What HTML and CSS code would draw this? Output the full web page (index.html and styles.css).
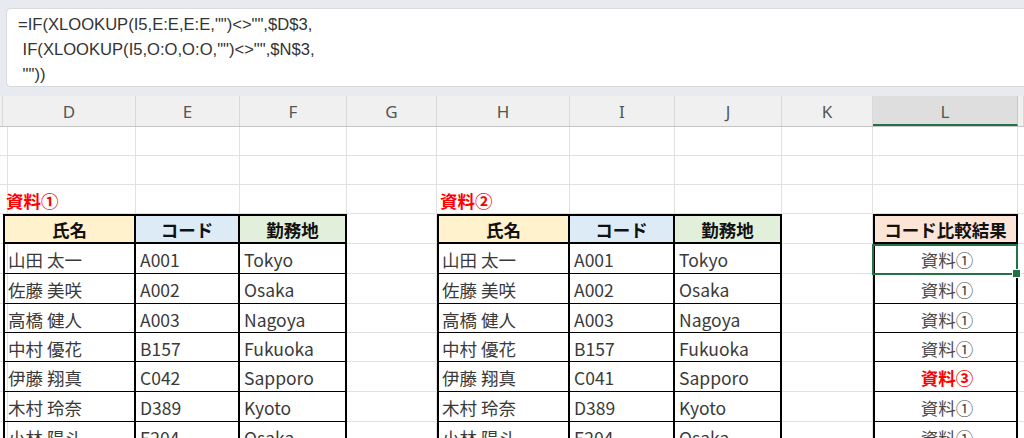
FILE: index.html
```html
<!DOCTYPE html>
<html lang="ja">
<head>
<meta charset="utf-8">
<title>Sheet</title>
<link rel="stylesheet" href="styles.css">
</head>
<body>
<div class="top">
  <div class="fbar"><div class="fl">=IF(XLOOKUP(I5,E:E,E:E,"")&lt;&gt;"",$D$3,</div><div class="fl"> IF(XLOOKUP(I5,O:O,O:O,"")&lt;&gt;"",$N$3,</div><div class="fl"> ""))</div></div>
</div>
<div class="cols">
  <div class="ch"></div>
  <div class="ch">D</div><div class="ch">E</div><div class="ch">F</div><div class="ch">G</div>
  <div class="ch">H</div><div class="ch">I</div><div class="ch">J</div><div class="ch">K</div>
  <div class="ch on">L</div><div class="ch"></div>
</div>
<div class="sheet">
  <div class="row s"><div class="c"></div><div class="c"></div><div class="c"></div><div class="c"></div><div class="c"></div><div class="c"></div><div class="c"></div><div class="c"></div><div class="c"></div><div class="c"></div><div class="c"></div></div>
  <div class="row s"><div class="c"></div><div class="c"></div><div class="c"></div><div class="c"></div><div class="c"></div><div class="c"></div><div class="c"></div><div class="c"></div><div class="c"></div><div class="c"></div><div class="c"></div></div>
  <div class="row s"><div class="c"></div><div class="c label">資料①</div><div class="c"></div><div class="c"></div><div class="c"></div><div class="c label">資料②</div><div class="c"></div><div class="c"></div><div class="c"></div><div class="c"></div><div class="c"></div></div>
  <div class="row"><div class="c"></div>
    <div class="c t first head yellow">氏名</div><div class="c t head blue">コード</div><div class="c t head green">勤務地</div>
    <div class="c"></div>
    <div class="c t first head yellow">氏名</div><div class="c t head blue">コード</div><div class="c t head green">勤務地</div>
    <div class="c"></div>
    <div class="c t first head orange">コード比較結果</div><div class="c"></div></div>
  <div class="row"><div class="c"></div>
    <div class="c t first">山田 太一</div><div class="c t">A001</div><div class="c t">Tokyo</div>
    <div class="c"></div>
    <div class="c t first">山田 太一</div><div class="c t">A001</div><div class="c t">Tokyo</div>
    <div class="c"></div>
    <div class="c t first mid sel">資料①</div><div class="c"></div></div>
  <div class="row"><div class="c"></div>
    <div class="c t first">佐藤 美咲</div><div class="c t">A002</div><div class="c t">Osaka</div>
    <div class="c"></div>
    <div class="c t first">佐藤 美咲</div><div class="c t">A002</div><div class="c t">Osaka</div>
    <div class="c"></div>
    <div class="c t first mid">資料①</div><div class="c"></div></div>
  <div class="row s"><div class="c"></div>
    <div class="c t first">高橋 健人</div><div class="c t">A003</div><div class="c t">Nagoya</div>
    <div class="c"></div>
    <div class="c t first">高橋 健人</div><div class="c t">A003</div><div class="c t">Nagoya</div>
    <div class="c"></div>
    <div class="c t first mid">資料①</div><div class="c"></div></div>
  <div class="row s"><div class="c"></div>
    <div class="c t first">中村 優花</div><div class="c t">B157</div><div class="c t">Fukuoka</div>
    <div class="c"></div>
    <div class="c t first">中村 優花</div><div class="c t">B157</div><div class="c t">Fukuoka</div>
    <div class="c"></div>
    <div class="c t first mid">資料①</div><div class="c"></div></div>
  <div class="row"><div class="c"></div>
    <div class="c t first">伊藤 翔真</div><div class="c t">C042</div><div class="c t">Sapporo</div>
    <div class="c"></div>
    <div class="c t first">伊藤 翔真</div><div class="c t">C041</div><div class="c t">Sapporo</div>
    <div class="c"></div>
    <div class="c t first mid alert">資料③</div><div class="c"></div></div>
  <div class="row"><div class="c"></div>
    <div class="c t first">木村 玲奈</div><div class="c t">D389</div><div class="c t">Kyoto</div>
    <div class="c"></div>
    <div class="c t first">木村 玲奈</div><div class="c t">D389</div><div class="c t">Kyoto</div>
    <div class="c"></div>
    <div class="c t first mid">資料①</div><div class="c"></div></div>
  <div class="row"><div class="c"></div>
    <div class="c t first">小林 陽斗</div><div class="c t">E204</div><div class="c t">Osaka</div>
    <div class="c"></div>
    <div class="c t first">小林 陽斗</div><div class="c t">E204</div><div class="c t">Osaka</div>
    <div class="c"></div>
    <div class="c t first mid">資料①</div><div class="c"></div></div>
</div>
</body>
</html>
```

FILE: styles.css
```css
* { box-sizing: border-box; margin: 0; padding: 0; }
:root { --cols: 3px 133px 104px 107px 90px 133px 105px 107px 91px 145px 1fr; }
body {
  width: 1024px; height: 438px; overflow: hidden; background: #fff;
  font-family: "Noto Sans CJK JP", "Noto Sans", sans-serif;
}
.top { height: 96px; background: #e7eaee; padding: 8px 0 9px 6px; }
.fbar {
  height: 79px; background: #fff; border: 1px solid #d6d9dd; border-right: none;
  border-radius: 5px 0 0 5px; padding: 3px 0 0 11px;
  font-family: "Liberation Sans", Arial, sans-serif; font-size: 16.6px; line-height: 25px;
  color: #333; white-space: pre;
}
.cols {
  display: grid; grid-template-columns: var(--cols); height: 31px;
  background: #f0f0f0; border-bottom: 1px solid #c6c6c6;
}
.ch {
  border-right: 1px solid #d9d9d9; display: flex; align-items: center; justify-content: center;
  font-family: "Noto Sans", sans-serif; font-size: 17px; color: #555; padding-top: 1px;
}
.ch.on { background: #dedede; border-bottom: 2px solid #217346; border-right-color: #c8c8c8; padding-top: 3px; }
.row { display: grid; grid-template-columns: var(--cols); height: 30px; }
.row.s { height: 29px; }
.c {
  border-right: 1px solid #e1e1e1; border-bottom: 1px solid #e1e1e1;
  display: flex; align-items: center; padding: 3px 3px 0 4px;
  font-size: 17.5px; line-height: 1; color: #3a3a3a; white-space: nowrap; overflow: visible;
}
.label { color: #ff0000; font-weight: bold; padding-left: 3px; }
.t { border-right: 2px solid #000; border-bottom: 1px solid #000; }
.t.first { border-left: 2px solid #000; padding-left: 3px; }
.t.head {
  border-top: 2px solid #000; border-bottom: 2px solid #000; justify-content: center;
  font-weight: bold; color: #111; font-size: 17.5px; padding: 1px 0 0;
}
.yellow { background: #fff2cc; }
.blue { background: #ddebf7; }
.green { background: #e2efda; }
.orange { background: #fce4d6; }
.mid { justify-content: center; padding-left: 0; padding-right: 0; color: #4a4a4a; }
.alert { color: #ff0000; font-weight: bold; }
.sel { position: relative; }
.sel::after {
  content: ""; position: absolute; left: -3px; right: -2px; top: 0; bottom: -2px;
  border: 2px solid #217346;
}
.sel::before {
  content: ""; position: absolute; right: -5px; bottom: -5px; width: 7px; height: 7px;
  background: #217346; border: 1px solid #fff; z-index: 2;
}
```
